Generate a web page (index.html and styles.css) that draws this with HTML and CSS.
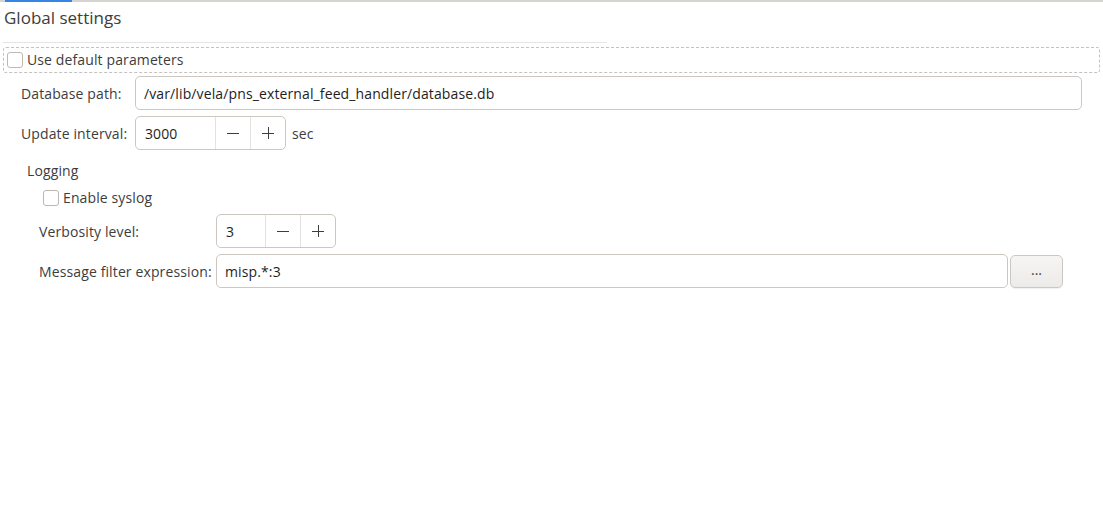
FILE: index.html
```html
<!DOCTYPE html>
<html>
<head>
<meta charset="utf-8">
<link rel="stylesheet" href="styles.css">
</head>
<body>
<div class="tabbar"><div class="tab-indicator"></div></div>
<div class="page">
  <div class="title">Global settings</div>
  <div class="sep"></div>
  <div class="focus-row">
    <span class="check"></span>
    <span class="check-label">Use default parameters</span>
  </div>
  <div class="form form-main">
    <span class="label">Database path:</span>
    <div class="entry">/var/lib/vela/pns_external_feed_handler/database.db</div>
    <span class="label">Update interval:</span>
    <div class="spin-row">
      <div class="spin spin-wide">
        <span class="spin-value">3000</span>
        <span class="spin-btn"><svg width="14" height="14" viewBox="0 0 14 14"><path d="M1 7.5h12" stroke="#3d3d3d" stroke-width="1"/></svg></span>
        <span class="spin-btn"><svg width="14" height="14" viewBox="0 0 14 14"><path d="M1 7.5h12M7.5 1v12" stroke="#3d3d3d" stroke-width="1"/></svg></span>
      </div>
      <span class="unit">sec</span>
    </div>
  </div>
  <div class="group">
    <div class="group-title">Logging</div>
    <div class="check-row">
      <span class="check"></span>
      <span class="check-label">Enable syslog</span>
    </div>
    <div class="form form-log">
      <span class="label">Verbosity level:</span>
      <div class="spin-row">
        <div class="spin spin-narrow">
          <span class="spin-value">3</span>
          <span class="spin-btn"><svg width="14" height="14" viewBox="0 0 14 14"><path d="M1 7.5h12" stroke="#3d3d3d" stroke-width="1"/></svg></span>
          <span class="spin-btn"><svg width="14" height="14" viewBox="0 0 14 14"><path d="M1 7.5h12M7.5 1v12" stroke="#3d3d3d" stroke-width="1"/></svg></span>
        </div>
      </div>
      <span class="label">Message filter expression:</span>
      <div class="entry-row">
        <div class="entry">misp.*:3</div>
        <button class="btn">...</button>
      </div>
    </div>
  </div>
</div>
</body>
</html>
```
FILE: styles.css
```css
html, body {
  margin: 0;
  padding: 0;
  background: #ffffff;
}
body {
  font-family: "Open Sans", "Noto Sans", sans-serif;
  font-size: 14px;
  letter-spacing: 0.12px;
  color: #3d3d3d;
  width: 1103px;
  height: 518px;
  overflow: hidden;
}
.tabbar {
  height: 2px;
  background: #d8d4d0;
}
.tab-indicator {
  margin-left: 5px;
  width: 67px;
  height: 2px;
  background: #3584e4;
}
.page {
  display: flex;
  flex-direction: column;
}
.title {
  margin-top: 5px;
  margin-left: 4px;
  font-size: 17px;
  line-height: 22px;
  letter-spacing: 0;
  color: #3d3d3d;
}
.sep {
  margin-top: 13px;
  margin-left: 3px;
  width: 604px;
  height: 1px;
  background: #e6e5e4;
}
.focus-row {
  margin: 4px 3px 0 3px;
  height: 24px;
  border: 1px dashed #c3c1bf;
  border-radius: 3px;
  display: flex;
  align-items: center;
  padding-left: 3px;
  gap: 4px;
}
.check {
  width: 14px;
  height: 14px;
  border: 1px solid #bdb8b3;
  border-radius: 3px;
  background: #fff;
  flex: none;
}
.check-label {
  line-height: 20px;
}
.form {
  display: grid;
  column-gap: 6px;
  row-gap: 6px;
  align-items: center;
}
.form-main {
  margin: 3px 21px 0 21px;
  grid-template-columns: 108px 1fr;
}
.label {
  white-space: nowrap;
}
.entry {
  height: 32px;
  border: 1px solid #cdc7c2;
  border-radius: 5px;
  background: #fff;
  display: flex;
  align-items: center;
  padding-left: 8px;
  color: #1e1e1e;
  box-sizing: content-box;
}
.spin-row {
  display: flex;
  align-items: center;
  gap: 6px;
}
.spin {
  display: flex;
  height: 32px;
  border: 1px solid #cdc7c2;
  border-radius: 5px;
  background: #fff;
}
.spin-value {
  display: flex;
  align-items: center;
  padding-left: 9px;
  color: #1e1e1e;
}
.spin-wide .spin-value { width: 70px; }
.spin-narrow .spin-value { width: 39px; }
.spin-btn {
  width: 34px;
  border-left: 1px solid #e4e1de;
  display: flex;
  align-items: center;
  justify-content: center;
}
.unit {
  color: #3d3d3d;
}
.group {
  margin: 11px 0 0 27px;
  display: flex;
  flex-direction: column;
}
.group-title {
  line-height: 20px;
}
.check-row {
  margin: 9px 0 0 16px;
  display: flex;
  align-items: center;
  gap: 4px;
  height: 16px;
}
.form-log {
  margin: 8px 40px 0 12px;
  grid-template-columns: 171px 1fr;
}
.entry-row {
  display: flex;
  align-items: center;
  gap: 2px;
}
.entry-row .entry {
  flex: 1;
}
.btn {
  width: 53px;
  height: 33px;
  border: 1px solid #cdc7c2;
  border-radius: 5px;
  background: linear-gradient(#f6f5f4, #edebe9);
  box-shadow: 0 1px 1px rgba(0,0,0,0.06);
  font-family: inherit;
  font-size: 14px;
  color: #3d3d3d;
  padding: 0 0 4px 0;
}
```
